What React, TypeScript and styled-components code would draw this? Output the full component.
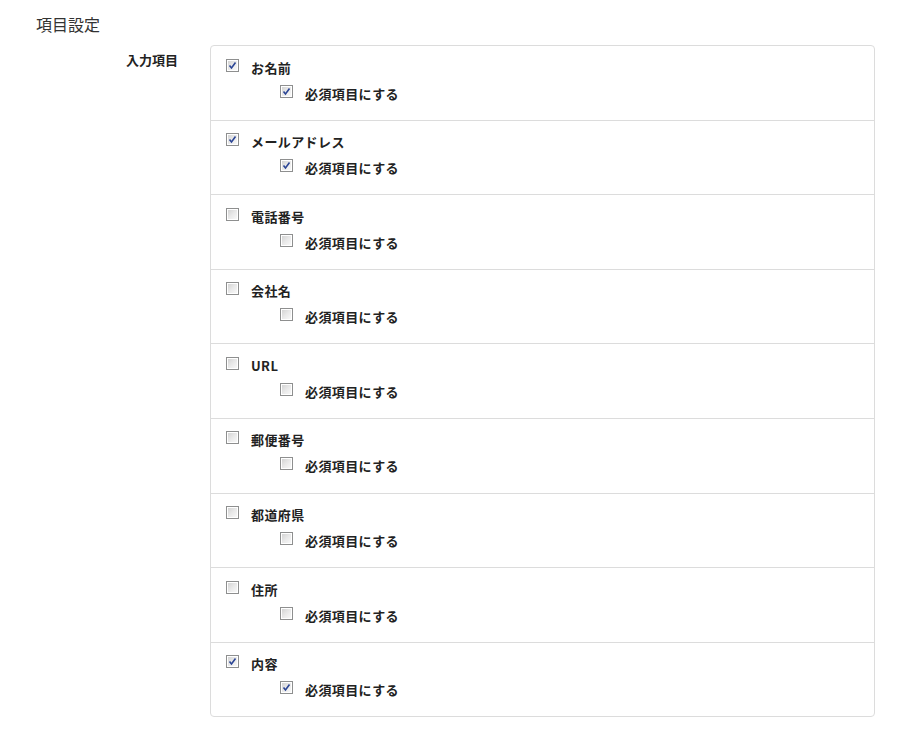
import React from "react";
import styled, { createGlobalStyle } from "styled-components";

const GlobalStyle = createGlobalStyle`
  html, body { margin: 0; padding: 0; background: #fff; }
  body {
    font-family: "Noto Sans CJK JP", "Noto Sans", sans-serif;
    color: #333;
  }
`;

const Page = styled.div`
  padding: 13px 0 0 36px;
`;

const Title = styled.h2`
  margin: 0 0 10px;
  font-size: 16px;
  line-height: 22px;
  font-weight: normal;
  color: #333;
`;

const FormGrid = styled.div`
  display: grid;
  grid-template-columns: 142px 665px;
  column-gap: 32px;
  align-items: start;
`;

const Label = styled.div`
  text-align: right;
  font-size: 13px;
  font-weight: bold;
  line-height: 20px;
  padding-top: 5px;
  color: #222;
`;

const Box = styled.div`
  border: 1px solid #dcdcdc;
  border-radius: 4px;
  overflow: hidden;
`;

const Row = styled.div`
  padding: 7.5px 15px 14.1px;
  border-top: 1px solid #dcdcdc;
  &:first-child { border-top: none; }
`;

const Line = styled.label<{ $indent?: boolean }>`
  display: flex;
  align-items: center;
  height: 26px;
  padding-left: ${(p) => (p.$indent ? "54px" : "0")};
  font-size: 13px;
  font-weight: bold;
  color: #222;
  gap: 12px;
`;

const Box13 = styled.span`
  position: relative;
  width: 13px;
  height: 13px;
  box-sizing: border-box;
  border: 1px solid #8e8f8f;
  background: #fff;
  flex: none;
  margin-top: -3px;
  &::before {
    content: "";
    position: absolute;
    inset: 1px;
    background: linear-gradient(135deg, #d4d4d4 0%, #e9e9e9 50%, #f8f8f8 100%);
  }
  svg { position: absolute; left: 1px; top: 1px; }
`;

const Text = styled.span`
  line-height: 26px;
  padding-top: 2px;
  letter-spacing: 0.4px;
`;

function Check({ checked }: { checked: boolean }) {
  return (
    <Box13>
      {checked && (
        <svg width="9" height="9" viewBox="0 0 9 9">
          <path d="M1.5 4.5 L3.5 7 L7.5 1.5" fill="none" stroke="#2b4595" strokeWidth="1.6" />
        </svg>
      )}
    </Box13>
  );
}

const items: { name: string; on: boolean; req: boolean }[] = [
  { name: "お名前", on: true, req: true },
  { name: "メールアドレス", on: true, req: true },
  { name: "電話番号", on: false, req: false },
  { name: "会社名", on: false, req: false },
  { name: "URL", on: false, req: false },
  { name: "郵便番号", on: false, req: false },
  { name: "都道府県", on: false, req: false },
  { name: "住所", on: false, req: false },
  { name: "内容", on: true, req: true },
];

export default function App() {
  return (
    <Page>
      <GlobalStyle />
      <Title>項目設定</Title>
      <FormGrid>
        <Label>入力項目</Label>
        <Box>
          {items.map((it) => (
            <Row key={it.name}>
              <Line>
                <Check checked={it.on} />
                <Text>{it.name}</Text>
              </Line>
              <Line $indent>
                <Check checked={it.req} />
                <Text>必須項目にする</Text>
              </Line>
            </Row>
          ))}
        </Box>
      </FormGrid>
    </Page>
  );
}
